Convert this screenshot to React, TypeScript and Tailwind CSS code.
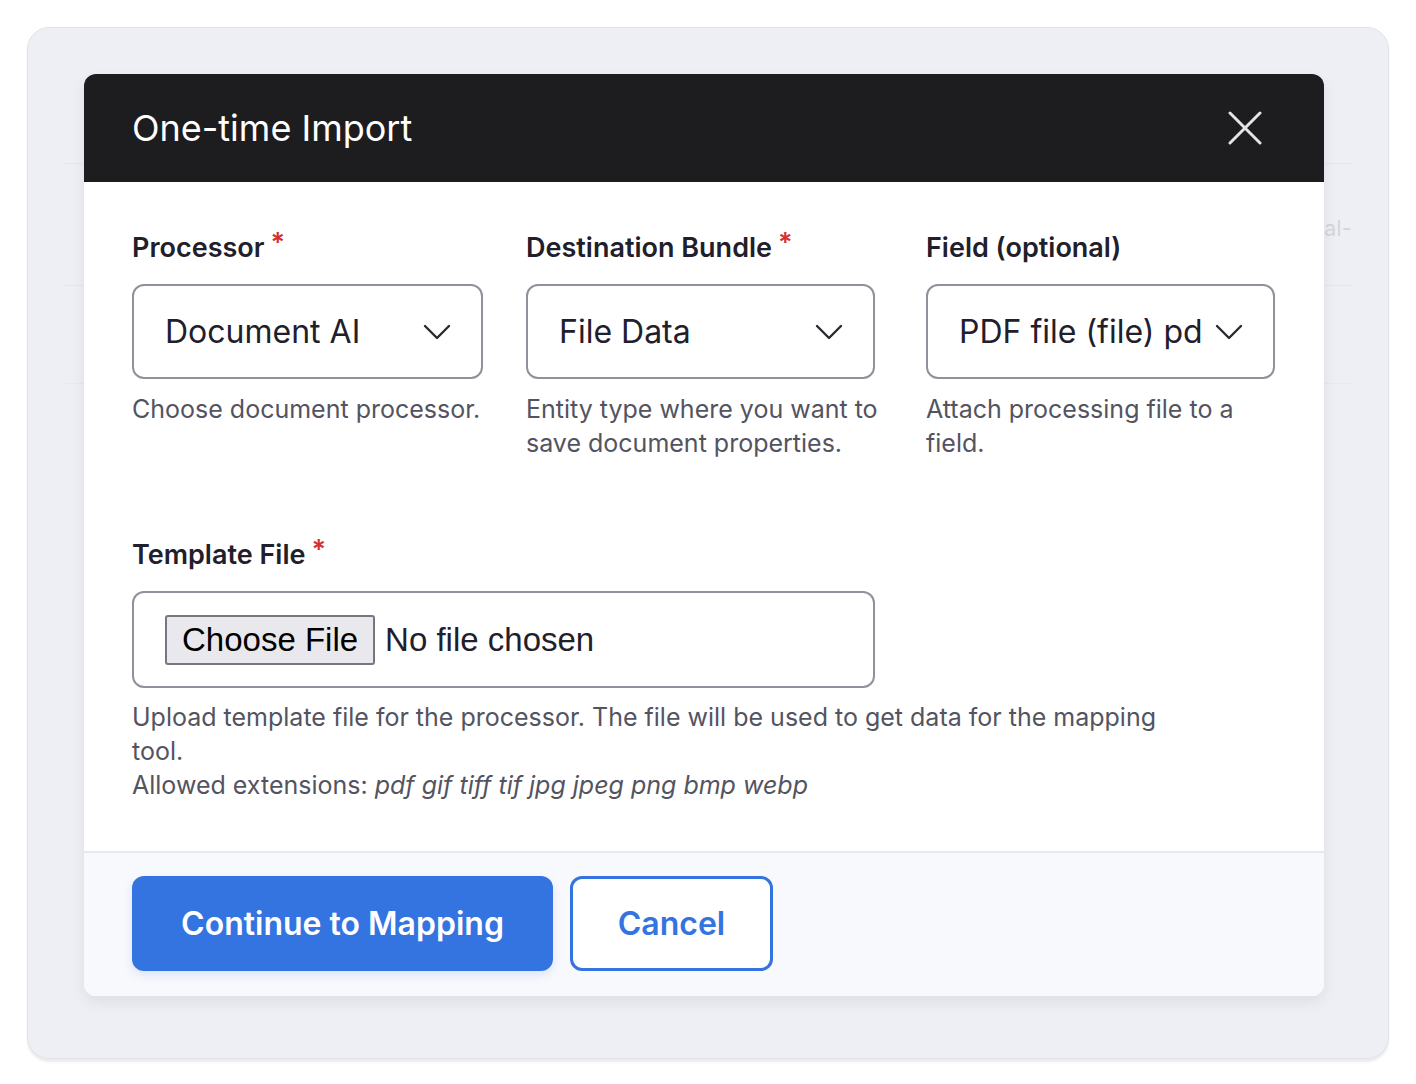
import React from "react";

function Chevron() {
  return (
    <svg width="28" height="18" viewBox="0 0 28 18" fill="none" className="shrink-0">
      <path d="M2 3l12 12L26 3" stroke="#2a2b33" strokeWidth="2.4" strokeLinecap="round" strokeLinejoin="round" />
    </svg>
  );
}

function Label({ text, required }: { text: string; required?: boolean }) {
  return (
    <div className="flex items-start text-[27px] font-semibold text-[#1f202b] leading-[36px] mb-[18px]">
      <span>{text}</span>
      {required && <span className="text-[27px] leading-[27px] text-[#d62f2f] ml-[6px] -mt-[1px]">*</span>}
    </div>
  );
}

function Select({ value, width }: { value: string; width: string }) {
  return (
    <div className={`${width} h-[95px] rounded-[12px] border-2 border-[#8f919b] bg-white flex items-center pl-[31px] pr-[30px] gap-[14px]`}>
      <span className="flex-1 text-[32px] text-[#1f202b] whitespace-nowrap overflow-hidden">{value}</span>
      <Chevron />
    </div>
  );
}

export default function App() {
  return (
    <div className="w-[1416px] h-[1084px] bg-white pt-[27px] px-[27px]" style={{ fontFamily: "Inter, 'Noto Sans', sans-serif" }}>
      <div className="relative h-[1032px] rounded-[22px] bg-[#eeeff4] border border-[#e3e4e9] shadow-[0_3px_2px_rgba(0,0,0,0.08)] pt-[46px] pl-[56px]">
        {/* faint page behind overlay */}
        <div className="absolute left-[36px] right-[36px] top-[135px] border-t border-[#e6e7ec]" />
        <div className="absolute left-[36px] right-[36px] top-[257px] border-t border-[#e6e7ec]" />
        <div className="absolute left-[36px] right-[36px] top-[355px] border-t border-[#e8e9ee]" />
        <div className="absolute left-[1296px] top-[184px] text-[22px] text-[#d4d5da]">al-</div>

        <div className="relative w-[1240px] rounded-[12px] bg-white overflow-hidden shadow-[0_6px_14px_rgba(40,40,60,0.08)]">
          <div className="h-[108px] bg-[#1d1d1f] flex items-center justify-between pl-[48px] pr-[62px]">
            <h1 className="text-[36px] text-white font-normal">One-time Import</h1>
            <svg width="34" height="34" viewBox="0 0 34 34" fill="none">
              <path d="M2 2l30 30M32 2L2 32" stroke="#e4e4e6" strokeWidth="3" strokeLinecap="round" />
            </svg>
          </div>

          <div className="px-[48px] pt-[48px] pb-[49px]">
            <div className="flex">
              <div className="w-[394px]">
                <Label text="Processor" required />
                <Select value="Document AI" width="w-[351px]" />
                <p className="mt-[13px] text-[25px] leading-[34px] text-[#53545f]">Choose document processor.</p>
              </div>
              <div className="w-[400px]">
                <Label text="Destination Bundle" required />
                <Select value="File Data" width="w-[349px]" />
                <p className="mt-[13px] text-[25px] leading-[34px] text-[#53545f] w-[372px]">Entity type where you want to save document properties.</p>
              </div>
              <div className="w-[350px]">
                <Label text="Field (optional)" />
                <Select value="PDF file (file) pdf" width="w-[349px]" />
                <p className="mt-[13px] text-[25px] leading-[34px] text-[#53545f] w-[330px]">Attach processing file to a field.</p>
              </div>
            </div>

            <div className="mt-[77px]">
              <Label text="Template File" required />
              <div className="w-[743px] h-[97px] rounded-[12px] border-2 border-[#8f919b] flex items-center pl-[31px] gap-[10px]">
                <span className="h-[50px] px-[15px] flex items-center rounded-[3px] border-2 border-[#767781] bg-[#e9e9ed] text-[33px] text-black" style={{ fontFamily: "'Liberation Sans', Arial, sans-serif" }}>Choose File</span>
                <span className="text-[33px] text-[#1f202b]" style={{ fontFamily: "'Liberation Sans', Arial, sans-serif" }}>No file chosen</span>
              </div>
              <div className="mt-[12px] text-[25px] leading-[34px] text-[#53545f] max-w-[1060px]">
                <p>Upload template file for the processor. The file will be used to get data for the mapping tool.</p>
                <p>Allowed extensions: <em>pdf gif tiff tif jpg jpeg png bmp webp</em></p>
              </div>
            </div>
          </div>

          <div className="border-t-2 border-[#e6e8ee] bg-[#f8f9fd] px-[48px] pt-[23px] pb-[25px] flex gap-[17px]">
            <button className="w-[421px] h-[95px] rounded-[12px] bg-[#3474e0] text-white text-[32px] font-semibold shadow-[0_4px_10px_rgba(52,116,224,0.15)]">Continue to Mapping</button>
            <button className="w-[203px] h-[95px] rounded-[12px] border-[3px] border-[#3474e0] bg-white text-[#3474e0] text-[32px] font-semibold">Cancel</button>
          </div>
        </div>
      </div>
    </div>
  );
}
